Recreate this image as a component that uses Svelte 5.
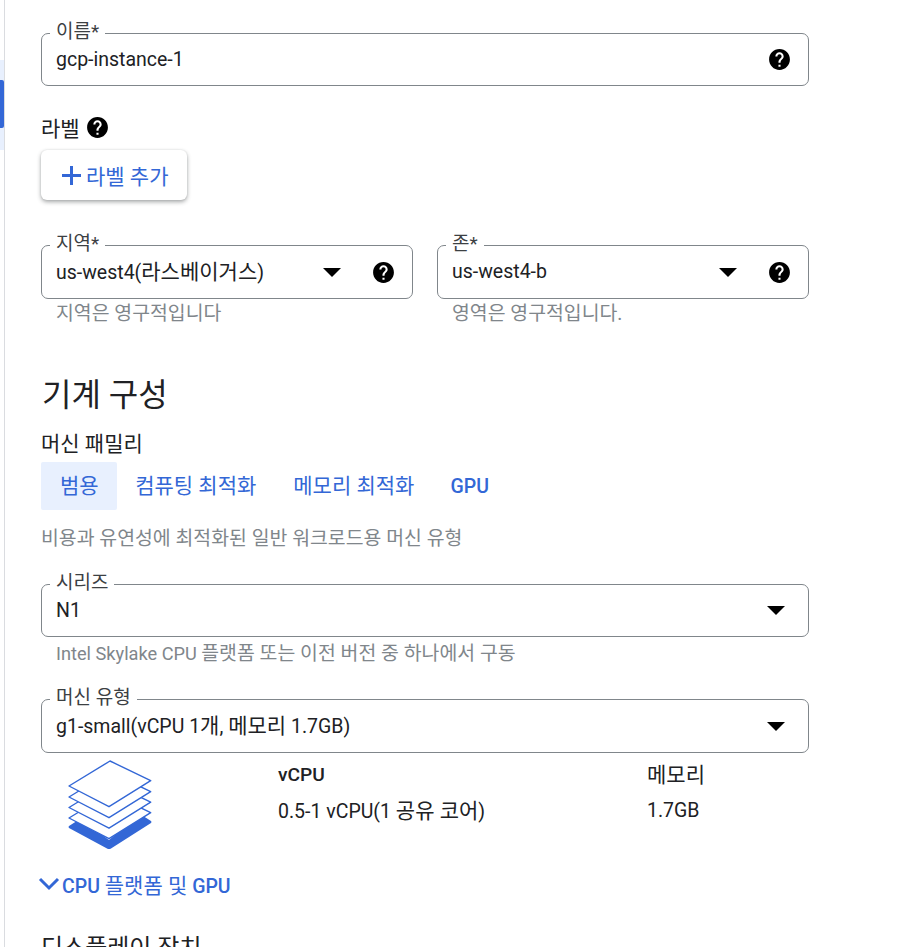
<script lang="ts">
  const help = "M12 2C6.48 2 2 6.48 2 12s4.48 10 10 10 10-4.48 10-10S17.52 2 12 2zm1 17h-2v-2h2v2zm2.07-7.75l-.9.92C13.45 12.9 13 13.5 13 15h-2v-.5c0-1.1.45-2.1 1.17-2.83l1.24-1.26c.37-.36.59-.86.59-1.41 0-1.1-.9-2-2-2s-2 .9-2 2H8c0-2.21 1.79-4 4-4s4 1.79 4 4c0 .88-.36 1.68-.93 2.25z";
  const tabs = ["범용", "컴퓨팅 최적화", "메모리 최적화", "GPU"];
  // y offset of each sheet in the stack, drawn bottom first
  const layers = [32, 21.5, 11, 0];
</script>

<div class="page">
  <aside class="rail"><div class="rail-tint"><div class="rail-bar"></div></div></aside>
  <main class="form">
    <div class="field name">
      <span class="float">이름*</span>
      <span class="value">gcp-instance-1</span>
      <svg class="help" viewBox="0 0 24 24"><path d={help} /></svg>
    </div>

    <div class="label-row">
      <span>라벨</span>
      <svg class="help" viewBox="0 0 24 24"><path d={help} /></svg>
    </div>
    <button class="add"><span class="plus"></span>라벨 추가</button>

    <div class="pair">
      <div>
        <div class="field tall">
          <span class="float">지역*</span>
          <span class="value">us-west4(<span class="ko">라스베이거스</span>)</span>
          <span class="caret"></span>
          <svg class="help" viewBox="0 0 24 24"><path d={help} /></svg>
        </div>
        <p class="hint">지역은 영구적입니다</p>
      </div>
      <div>
        <div class="field tall">
          <span class="float">존*</span>
          <span class="value">us-west4-b</span>
          <span class="caret"></span>
          <svg class="help" viewBox="0 0 24 24"><path d={help} /></svg>
        </div>
        <p class="hint">영역은 영구적입니다.</p>
      </div>
    </div>

    <h2>기계 구성</h2>
    <div class="family">머신 패밀리</div>
    <div class="tabs">
      {#each tabs as t, i}
        <div class="tab" class:active={i === 0} class:latin={t === "GPU"}>{t}</div>
      {/each}
    </div>
    <p class="family-desc">비용과 유연성에 최적화된 일반 워크로드용 머신 유형</p>

    <div class="field series">
      <span class="float">시리즈</span>
      <span class="value">N1</span>
      <span class="caret solo"></span>
    </div>
    <p class="hint series-hint">Intel Skylake CPU <span class="ko-hint">플랫폼 또는 이전 버전 중 하나에서 구동</span></p>

    <div class="field tall type">
      <span class="float">머신 유형</span>
      <span class="value">g1-small(vCPU 1<span class="ko">개</span>, <span class="ko">메모리</span> 1.7GB)</span>
      <span class="caret solo"></span>
    </div>

    <div class="specs">
      <svg class="stack" viewBox="0 0 88 94">
        <path class="solid" d="M3 68 L14 61 L43 82 L74 56 L85 63 Q86 64 85 65 L45 90.5 Q43 91.5 41 90.5 L3 70 Q2 69 3 68Z" />
        {#each layers as off}
          <path class="sheet" d="M44 {3 + off} L84.7 {22.7 + off} L43 {48.7 + off} L3 {28 + off}Z" />
        {/each}
      </svg>
      <div class="col vcpu">
        <div class="head">vCPU</div>
        <div>0.5-1 vCPU(1 <span class="ko">공유 코어</span>)</div>
      </div>
      <div class="col mem">
        <div class="head light">메모리</div>
        <div>1.7GB</div>
      </div>
    </div>

    <div class="expand">
      <svg viewBox="0 0 24 16"><path d="M3 3 L12 12 L21 3" /></svg>
      <span>CPU <span class="ko">플랫폼 및</span> GPU</span>
    </div>

    <h3>디스플레이 장치</h3>
  </main>
</div>

<style>
  :global(body) {
    overflow: hidden;
    background: #fff;
  }
  .page {
    display: flex;
    height: 947px;
    overflow: hidden;
    font-family: Roboto, "Noto Sans CJK KR", sans-serif;
    color: #202124;
  }
  .rail {
    width: 4px;
    border-right: 1px solid #dadce0;
    padding-top: 60px;
    flex: none;
  }
  .rail-tint {
    height: 90px;
    background: #e8f0fe;
    padding-top: 20px;
    box-sizing: border-box;
  }
  .rail-bar {
    height: 48px;
    background: #3367d6;
    border-radius: 0 2px 2px 0;
  }
  .form {
    width: 768px;
    margin-left: 36px;
    padding-top: 33px;
    font-size: 19.5px;
  }
  .ko {
    font-size: 21px;
    font-weight: 400;
  }
  .ko-hint {
    font-size: 19.4px;
  }
  .field {
    position: relative;
    display: flex;
    align-items: center;
    height: 53px;
    box-sizing: border-box;
    border: 1px solid #80868b;
    border-radius: 7px;
    padding: 0 14px;
  }
  .field.tall {
    height: 54px;
  }
  .float {
    position: absolute;
    left: 8px;
    top: -13px;
    background: #fff;
    padding: 0 6px;
    font-size: 19px;
    line-height: 22px;
    color: #3c4043;
  }
  .value {
    flex: 1;
    font-size: 19.5px;
    line-height: 26px;
    color: #202124;
    white-space: nowrap;
  }
  .help {
    width: 25px;
    height: 25px;
    flex: none;
    fill: #000;
  }
  .caret {
    width: 0;
    height: 0;
    border-left: 9px solid transparent;
    border-right: 9px solid transparent;
    border-top: 9px solid #000;
    margin-right: 29.5px;
    flex: none;
  }
  .caret.solo {
    margin-right: 9px;
  }
  .field .help {
    margin-right: 2.5px;
  }
  .label-row {
    display: flex;
    align-items: center;
    gap: 5.5px;
    height: 24px;
    margin-top: 29px;
    font-size: 21px;
  }
  .add {
    display: flex;
    align-items: center;
    margin-top: 11px;
    width: 146px;
    height: 50px;
    padding: 0 0 0 21px;
    border: 0;
    border-radius: 6px;
    background: #fff;
    box-shadow: 0 2px 4px rgba(60, 64, 67, 0.45), 0 0 2px rgba(60, 64, 67, 0.12);
    color: #3367d6;
    font: inherit;
    font-size: 21px;
  }
  .plus {
    width: 19px;
    height: 19px;
    margin-right: 5px;
    background:
      linear-gradient(#3367d6, #3367d6) center / 100% 3px no-repeat,
      linear-gradient(#3367d6, #3367d6) center / 3px 100% no-repeat;
  }
  .pair {
    display: grid;
    grid-template-columns: 372px 372px;
    gap: 24px;
    margin-top: 45px;
  }
  .hint {
    margin: 4px 0 0 15px;
    font-size: 19.4px;
    line-height: 22px;
    color: #80868b;
  }
  .series-hint {
    font-size: 18.2px;
    margin-top: 6px;
  }
  h2 {
    margin: 48px 0 0 1px;
    font-size: 32px;
    font-weight: 400;
    line-height: 44px;
    color: #202124;
  }
  .family {
    margin-top: 14px;
    font-size: 21px;
    line-height: 26px;
  }
  .tabs {
    display: flex;
    margin-top: 5px;
    height: 48px;
  }
  .tab {
    display: flex;
    align-items: center;
    padding: 0 18.5px 4px;
    color: #3367d6;
    font-size: 21px;
  }
  .tab.active {
    background: #e8f0fe;
    border-radius: 2px;
    padding-left: 19px;
    padding-right: 18px;
  }
  .tab.latin {
    font-weight: 500;
    font-size: 19.5px;
    padding-bottom: 0;
    margin-left: -1px;
  }
  .family-desc {
    margin: 17px 0 0;
    font-size: 19.4px;
    line-height: 24px;
    color: #80868b;
  }
  .series {
    margin-top: 33px;
  }
  .type {
    margin-top: 34px;
  }
  .specs {
    display: flex;
    margin-top: 5px;
    height: 94px;
    font-size: 19.5px;
  }
  .stack {
    width: 88px;
    height: 94px;
    margin-left: 25px;
    flex: none;
  }
  .stack .sheet {
    fill: #fff;
    stroke: #3367d6;
    stroke-width: 1.4;
    stroke-linejoin: round;
  }
  .stack .solid {
    fill: #3367d6;
  }
  .col {
    display: flex;
    flex-direction: column;
    gap: 12px;
    padding-top: 5px;
    line-height: 24px;
  }
  .vcpu {
    margin-left: 124px;
    width: 369px;
  }
  .head {
    font-weight: 500;
    font-size: 19.2px;
  }
  .head.light {
    font-weight: 400;
    font-size: 21px;
  }
  .expand {
    display: flex;
    align-items: center;
    margin: 17px 0 0 -4px;
    color: #3367d6;
    font-weight: 500;
    font-size: 19.5px;
    gap: 1px;
  }
  .expand svg {
    width: 24px;
    height: 16px;
    fill: none;
    stroke: #3367d6;
    stroke-width: 3;
  }
  h3 {
    margin: 29px 0 0;
    font-size: 24px;
    font-weight: 400;
    color: #202124;
  }
</style>
